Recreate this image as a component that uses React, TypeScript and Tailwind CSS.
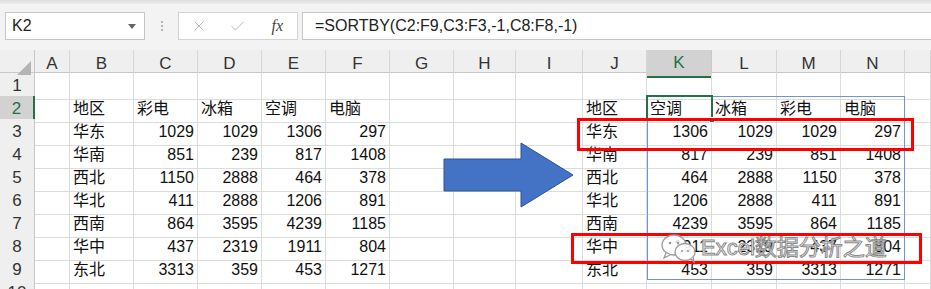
import { X, Check } from "lucide-react";

const COLS = "grid-cols-[35px_35px_64px_64px_64px_64px_64px_64px_62px_67px_64px_65px_65px_64px_64px_1fr]";
const LETTERS = ["A", "B", "C", "D", "E", "F", "G", "H", "I", "J", "K", "L", "M", "N", ""];

const left: (string | number)[][] = [
  ["地区", "彩电", "冰箱", "空调", "电脑"],
  ["华东", 1029, 1029, 1306, 297],
  ["华南", 851, 239, 817, 1408],
  ["西北", 1150, 2888, 464, 378],
  ["华北", 411, 2888, 1206, 891],
  ["西南", 864, 3595, 4239, 1185],
  ["华中", 437, 2319, 1911, 804],
  ["东北", 3313, 359, 453, 1271],
];

// sorted copy: 空调, 冰箱, 彩电, 电脑
const right = left.map((r) => [r[0], r[3], r[2], r[1], r[4]]);

function rowCells(n: number): (string | number)[] {
  const cells: (string | number)[] = Array(15).fill("");
  if (n >= 2 && n <= 9) {
    const l = left[n - 2];
    const r = right[n - 2];
    for (let i = 0; i < 5; i++) {
      cells[1 + i] = l[i];
      cells[9 + i] = r[i];
    }
  }
  return cells;
}

function FormulaBar() {
  return (
    <div className="h-[50px] bg-[#f3f3f3] relative">
      <div className="h-[4px] bg-gradient-to-b from-[#dcdcdc] to-[#ededed]" />
      <div className="flex items-stretch pl-[5px] pt-[8px] h-[36px]">
        <div className="w-[140px] bg-white border border-[#c6c6c6] flex items-center justify-between pl-[6px] pr-[8px]">
          <span className="text-[16px] text-[#222]">K2</span>
          <svg width="8" height="5" viewBox="0 0 8 5">
            <path d="M0 0h8L4 5z" fill="#666" />
          </svg>
        </div>
        <div className="w-[33px] flex flex-col items-center justify-center gap-[2px]">
          <span className="w-[2px] h-[2px] bg-[#b5b5b5]" />
          <span className="w-[2px] h-[2px] bg-[#b5b5b5]" />
          <span className="w-[2px] h-[2px] bg-[#b5b5b5]" />
        </div>
        <div className="w-[120px] bg-white border border-[#d4d4d4] flex items-center">
          <div className="w-[40px] flex justify-center">
            <X size={16} strokeWidth={1.4} color="#b5b5b5" />
          </div>
          <div className="w-[40px] flex justify-center">
            <Check size={17} strokeWidth={1.4} color="#b5b5b5" />
          </div>
          <div className="w-[40px] flex justify-center">
            <span className="italic text-[16px] text-[#444] [font-family:'Liberation_Serif',serif]">fx</span>
          </div>
        </div>
        <div className="ml-[4px] flex-1 bg-white border border-r-0 border-[#c6c6c6] flex items-center pl-[12px]">
          <span className="text-[16px] text-[#222]">=SORTBY(C2:F9,C3:F3,-1,C8:F8,-1)</span>
        </div>
      </div>
    </div>
  );
}

function HeaderRow() {
  return (
    <div className={`grid ${COLS} h-[23px] bg-[#efefef] border-b border-[#c8c8c8]`}>
      <div className="border-r border-[#c8c8c8] relative">
        <svg className="absolute right-[3px] bottom-[3px]" width="14" height="14" viewBox="0 0 14 14">
          <path d="M14 0V14H0z" fill="#b4b4b4" />
        </svg>
      </div>
      {LETTERS.map((c, i) => {
        const active = c === "K";
        return (
          <div
            key={i}
            className={`flex items-center justify-center text-[17px] border-r ${
              active
                ? "bg-[#d2d2d2] text-[#217346] border-b-2 border-b-[#217346] border-r-[#c8c8c8]"
                : "text-[#333] border-[#d6d6d6]"
            }`}
          >
            {c}
          </div>
        );
      })}
    </div>
  );
}

function Row({ n }: { n: number }) {
  const cells = rowCells(n);
  const active = n === 2;
  return (
    <div className={`grid ${COLS} h-[23px]`}>
      <div
        className={`flex items-center justify-center text-[17px] border-b border-[#d6d6d6] ${
          active
            ? "bg-[#d2d2d2] text-[#217346] border-r-2 border-r-[#217346]"
            : "bg-[#efefef] text-[#333] border-r border-r-[#c8c8c8]"
        }`}
      >
        {n}
      </div>
      {cells.map((v, i) => (
        <div
          key={i}
          className={`flex items-center border-r border-b border-[#dcdcdc] px-[3px] text-[16px] text-[#111] overflow-hidden whitespace-nowrap ${
            typeof v === "number" ? "justify-end" : "justify-start"
          }`}
        >
          {v}
        </div>
      ))}
    </div>
  );
}

function WeChatMark() {
  return (
    <svg width="38" height="30" viewBox="0 0 38 30">
      <ellipse cx="14" cy="12" rx="12" ry="10" fill="rgba(255,255,255,0.85)" stroke="#9a9a9a" strokeWidth="1.3" />
      <path d="M6 20l-2 5 6-3" fill="rgba(255,255,255,0.85)" stroke="#9a9a9a" strokeWidth="1.3" />
      <ellipse cx="25" cy="19" rx="10" ry="8.5" fill="rgba(255,255,255,0.9)" stroke="#9a9a9a" strokeWidth="1.3" />
      <path d="M31 26l3 3-1-5" fill="rgba(255,255,255,0.9)" stroke="#9a9a9a" strokeWidth="1.3" />
      <circle cx="10" cy="10" r="1.3" fill="#9a9a9a" />
      <circle cx="18" cy="10" r="1.3" fill="#9a9a9a" />
      <circle cx="22" cy="18" r="1.1" fill="#9a9a9a" />
      <circle cx="28" cy="18" r="1.1" fill="#9a9a9a" />
    </svg>
  );
}

export default function App() {
  return (
    <div className="relative w-[931px] h-[289px] overflow-hidden bg-white [font-family:'Liberation_Sans','Noto_Sans_CJK_SC',sans-serif]">
      <FormulaBar />
      <HeaderRow />
      {Array.from({ length: 10 }, (_, i) => (
        <Row key={i} n={i + 1} />
      ))}

      {/* spill range border */}
      <div className="absolute left-[647px] top-[96px] w-[258px] h-[184px] border border-[#6f95d6] pointer-events-none" />
      {/* active cell */}
      <div className="absolute left-[646px] top-[95px] w-[67px] h-[25px] border-2 border-[#217346]" />
      <div className="absolute left-[709px] top-[117px] w-[6px] h-[6px] bg-[#217346] border border-white" />

      {/* arrow */}
      <svg className="absolute left-[443px] top-[142px]" width="132" height="67" viewBox="0 0 132 67">
        <path d="M1 17H78V1L130 33 78 65V49H1z" fill="#4472c4" stroke="#2f528f" strokeWidth="1" />
      </svg>

      {/* highlight boxes */}
      <div className="absolute left-[577px] top-[118px] w-[337px] h-[33px] border-[3px] border-[#ff0000]" />
      <div className="absolute left-[571px] top-[233px] w-[351px] h-[31px] border-[3px] border-[#ff0000]" />

      {/* watermark */}
      <div className="absolute left-[660px] top-[233px] flex items-center gap-[3px]">
        <WeChatMark />
        <span className="text-[22px] leading-none text-white/90 [-webkit-text-stroke:1px_#8a8a8a]">
          Excel数据分析之道
        </span>
      </div>
    </div>
  );
}
